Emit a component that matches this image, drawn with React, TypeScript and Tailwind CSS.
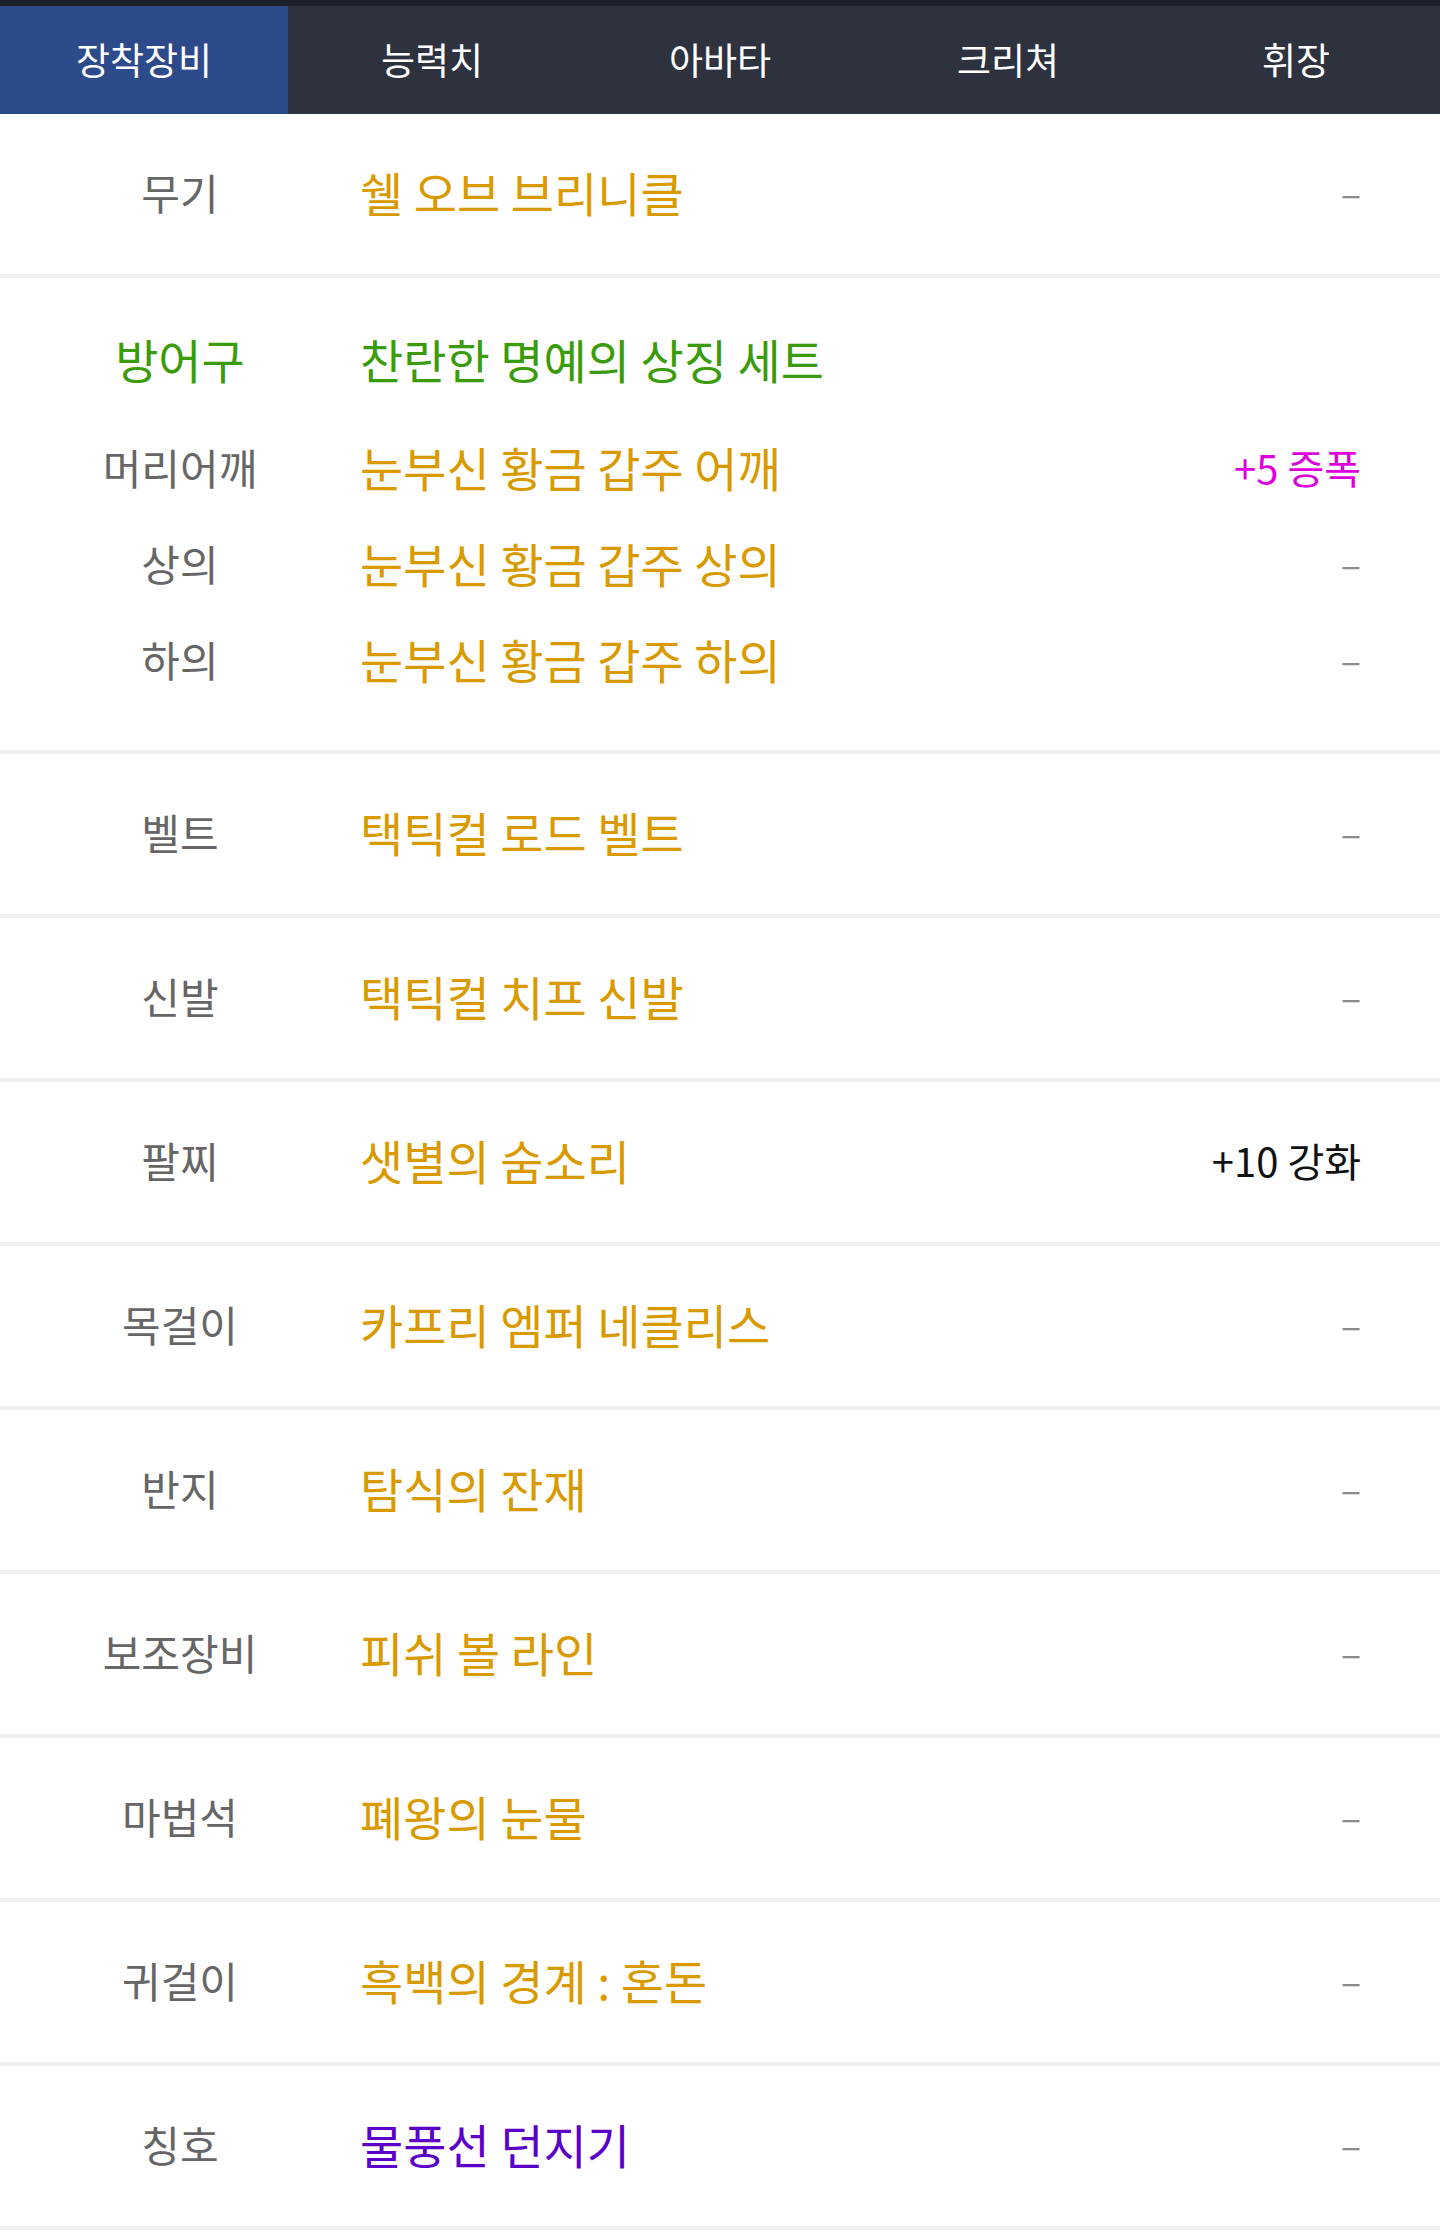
import React from "react";

type Row = { label: string; name: string; value: string; nameColor?: string; valueColor?: string };

const tabs = ["장착장비", "능력치", "아바타", "크리쳐", "휘장"];

const rows: Row[] = [
  { label: "벨트", name: "택틱컬 로드 벨트", value: "–" },
  { label: "신발", name: "택틱컬 치프 신발", value: "–" },
  { label: "팔찌", name: "샛별의 숨소리", value: "+10 강화", valueColor: "text-[#111111] text-[40px]" },
  { label: "목걸이", name: "카프리 엠퍼 네클리스", value: "–" },
  { label: "반지", name: "탐식의 잔재", value: "–" },
  { label: "보조장비", name: "피쉬 볼 라인", value: "–" },
  { label: "마법석", name: "폐왕의 눈물", value: "–" },
  { label: "귀걸이", name: "흑백의 경계 : 혼돈", value: "–" },
  { label: "칭호", name: "물풍선 던지기", value: "–", nameColor: "text-[#5a00c8]" },
];

const armor: Row[] = [
  { label: "머리어깨", name: "눈부신 황금 갑주 어깨", value: "+5 증폭", valueColor: "text-[#dd00dd] text-[40px]" },
  { label: "상의", name: "눈부신 황금 갑주 상의", value: "–" },
  { label: "하의", name: "눈부신 황금 갑주 하의", value: "–" },
];

function Line({ r, h }: { r: Row; h: string }) {
  return (
    <div className={`flex items-center pb-[5px] ${h}`}>
      <div className="w-[360px] text-center text-[42px] text-[#666666]">{r.label}</div>
      <div className={`flex-1 text-[47px] ${r.nameColor ?? "text-[#d99a00]"}`}>{r.name}</div>
      <div className={`pr-[79px] text-right ${r.valueColor ?? "text-[38px] text-[#8c8c8c]"}`}>{r.value}</div>
    </div>
  );
}

export default function App() {
  return (
    <div className="w-[1440px] bg-white font-['Noto_Sans_CJK_KR','Noto_Sans',sans-serif] leading-none">
      <div className="h-[6px] bg-[#1d2129]" />
      <nav className="flex h-[108px] bg-[#2d323e]">
        {tabs.map((t, i) => (
          <div
            key={t}
            className={`flex flex-1 items-center justify-center pb-[2px] text-[37px] text-white ${i === 0 ? "bg-[#2d4a8b]" : ""}`}
          >
            {t}
          </div>
        ))}
      </nav>
      <div className="border-b-4 border-[#f0f0f0]">
        <Line r={{ label: "무기", name: "쉘 오브 브리니클", value: "–" }} h="h-[160px]" />
      </div>
      <div className="border-b-4 border-[#f0f0f0] pt-[35px] pb-[41px]">
        <div className="mb-[12px] flex h-[96px] items-center pb-[5px]">
          <div className="w-[360px] text-center text-[47px] text-[#3a9b0b]">방어구</div>
          <div className="flex-1 text-[47px] text-[#3a9b0b]">찬란한 명예의 상징 세트</div>
        </div>
        {armor.map((r) => (
          <Line key={r.label} r={r} h="h-[96px]" />
        ))}
      </div>
      {rows.map((r) => (
        <div key={r.label} className="border-b-4 border-[#f0f0f0]">
          <Line r={r} h="h-[160px]" />
        </div>
      ))}
      <div className="h-[6px]" />
    </div>
  );
}
